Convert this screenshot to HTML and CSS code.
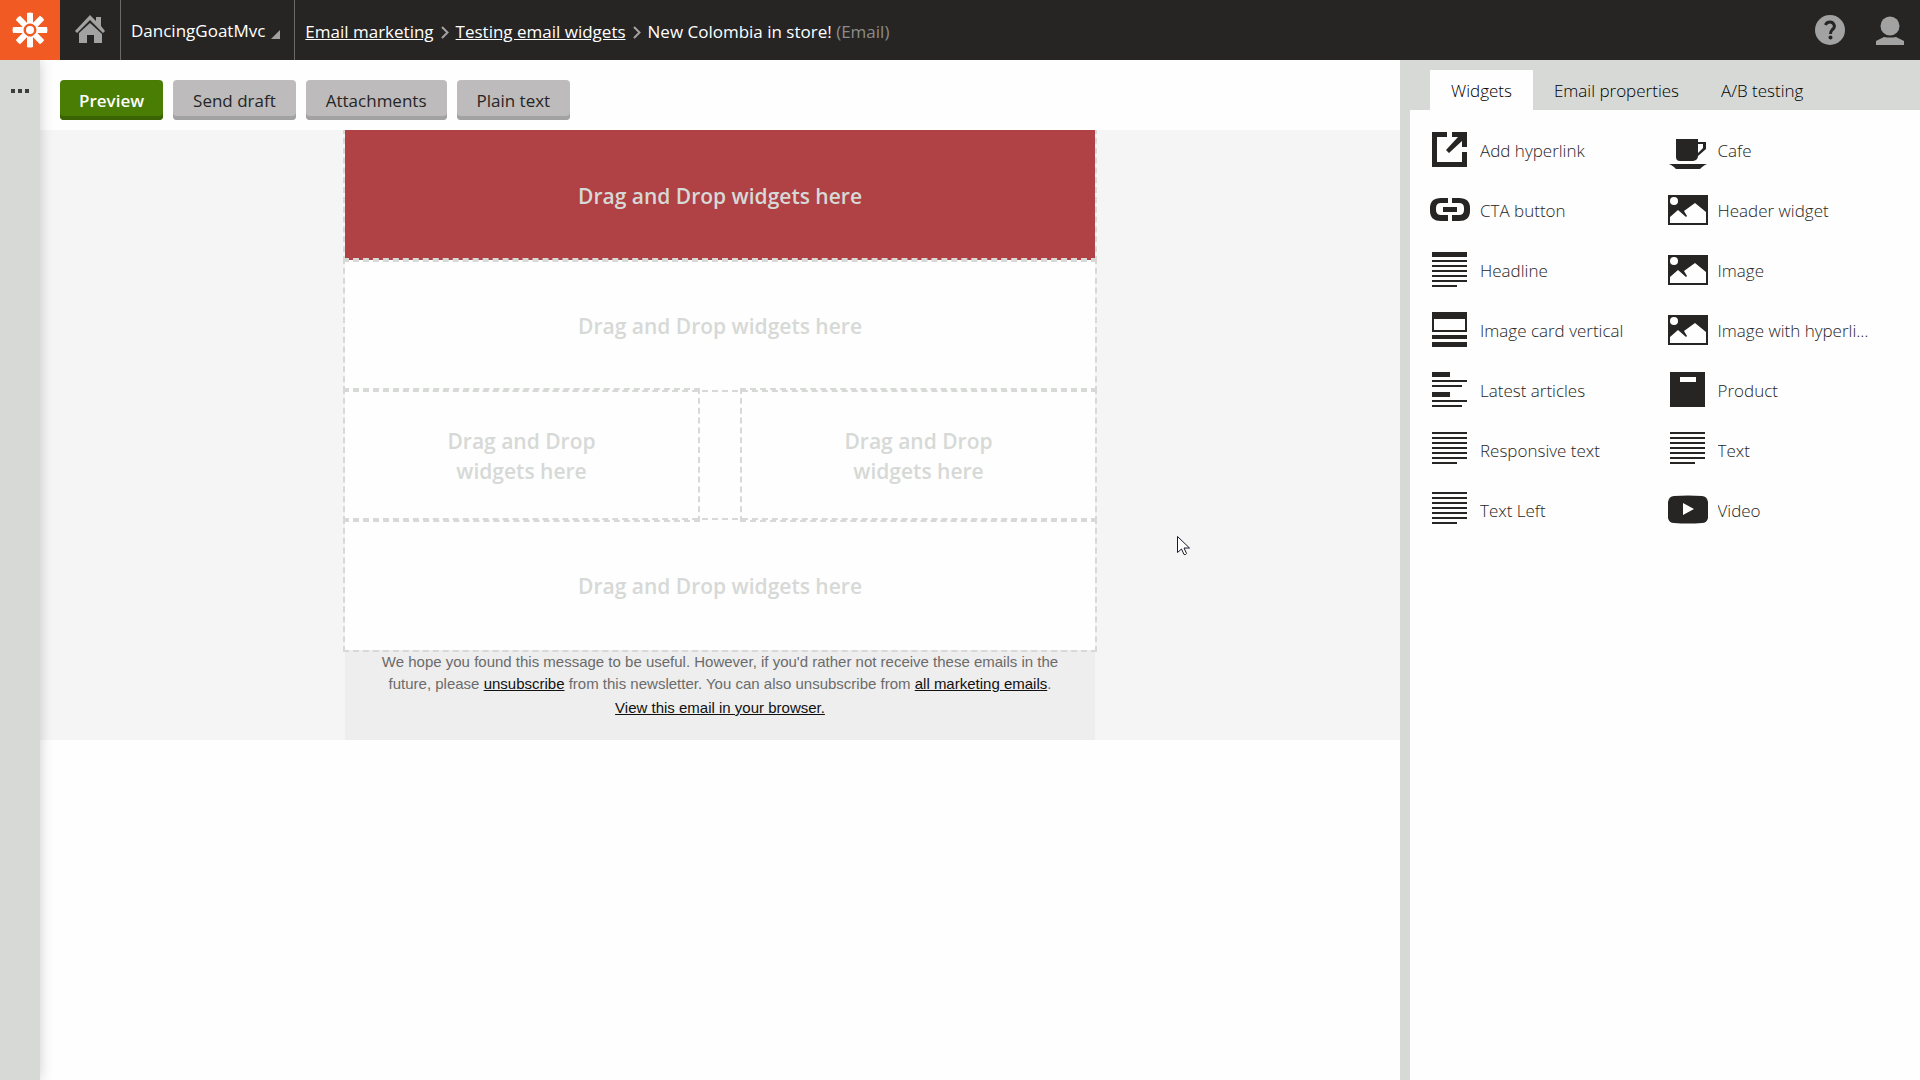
FILE: index.html
```
<!DOCTYPE html>
<html lang="en">
<head>
<meta charset="utf-8">
<title>New Colombia in store!</title>
<link rel="stylesheet" href="styles.css">
</head>
<body>
<svg class="sprite" aria-hidden="true">
  <symbol id="i-open" viewBox="0 0 40 40"><path d="M2 2h15v5H7v25h25V22h5v15H2zM22 2h15v15h-5v-6L19 23l-3-3 12-13h-6z"/></symbol>
  <symbol id="i-cup" viewBox="0 0 40 40"><path d="M8 9h22v3h8v7l-8 7a5 5 0 0 1-5 5H12a4 4 0 0 1-4-4zM30 14v9l5-5v-4zM1 34h38c-3 1-5 3-7 5H8c-2-2-4-4-7-5z" fill-rule="evenodd"/></symbol>
  <symbol id="i-chain" viewBox="0 0 40 40"><path d="M18 8v5h-7q-5 0-5 5v2q0 5 5 5h7v6h-7Q0 31 0 21v-3Q0 8 11 8zM22 8v5h7q5 0 5 5v2q0 5-5 5h-7v6h7q11 0 11-10v-3Q40 8 29 8zM13 17h14v5H13z"/></symbol>
  <symbol id="i-picture" viewBox="0 0 40 40"><path d="M0 5h40v30H0zM2 27v6h36V22L27 13l-11 8 3 5-1 1-8-7z" fill-rule="evenodd"/><circle cx="6" cy="11" r="4" fill="#fff"/></symbol>
  <symbol id="i-headline" viewBox="0 0 40 40"><path d="M2 2h35v5H2zM2 10h35v2H2zM2 15h35v2H2zM2 20h35v2H2zM2 25h35v2H2zM2 30h35v2H2zM2 35h25v2H2z"/></symbol>
  <symbol id="i-card" viewBox="0 0 40 40"><path d="M2 2h35v20H2zM4 9v11h31V9zM2 25h35v4H2zM2 32h35v5H2z" fill-rule="evenodd"/></symbol>
  <symbol id="i-articles" viewBox="0 0 40 40"><path d="M2 2h18v5H2zM2 10h35v2H2zM2 15h30v2H2zM2 22h18v5H2zM2 30h35v2H2zM2 35h30v2H2z"/></symbol>
  <symbol id="i-product" viewBox="0 0 40 40"><path d="M2 2h35v35H2zM12 7v5h16V7z" fill-rule="evenodd"/></symbol>
  <symbol id="i-text" viewBox="0 0 40 40"><path d="M2 2h35v2H2zM2 7h35v2H2zM2 12h35v2H2zM2 17h35v2H2zM2 22h35v2H2zM2 27h35v2H2zM2 32h25v2H2z"/></symbol>
  <symbol id="i-video" viewBox="0 0 40 40"><path d="M6 6q14-1 28 0 5 0 6 6 1 8 0 16-1 5-6 5-14 1-28 0-5 0-6-5-1-8 0-16 1-6 6-6zM15 13v12l11-6z" fill-rule="evenodd"/></symbol>
</svg>
<header class="topbar">
  <a class="logo" href="#" aria-label="Dashboard">
    <svg width="36" height="36" viewBox="-18 -18 36 36" fill="#fff">
      <circle r="4"/>
      <g id="petals"><path id="petal" d="M-3-17q3-1 6 0v11q-3-1-6 0z"/><use href="#petal" transform="rotate(45)"/><use href="#petal" transform="rotate(90)"/><use href="#petal" transform="rotate(135)"/></g>
      <use href="#petals" transform="rotate(180)"/>
    </svg>
  </a>
  <a class="home" href="#" aria-label="Home">
    <svg width="30" height="30" viewBox="0 0 30 30" fill="#a3a2a2"><path d="M15 0l6 6V2h5v9l4 5-2 2L15 5 2 18l-2-2zM15 8l12 11v9h-8v-8h-7v8H4V18z"/></svg>
  </a>
  <button class="site" type="button">DancingGoatMvc <svg width="9" height="9" viewBox="0 0 9 9" fill="#a3a2a2"><path d="M9 0v9H0z"/></svg></button>
  <nav class="crumbs" aria-label="Breadcrumb">
    <a href="#">Email marketing</a>
    <svg class="chevron" width="8" height="13" viewBox="0 0 8 13"><path d="M1 1l5.500 5.500L1 12"/></svg>
    <a href="#">Testing email widgets</a>
    <svg class="chevron" width="8" height="13" viewBox="0 0 8 13"><path d="M1 1l5.500 5.500L1 12"/></svg>
    <span>New Colombia in store! <span class="kind">(Email)</span></span>
  </nav>
  <button class="tool" type="button" aria-label="Help">
    <svg width="30" height="30" viewBox="0 0 30 30"><circle cx="15" cy="15" r="15" fill="#a3a2a2"/><path d="M10.500 10q1-3 4.500-3t4.500 4q0 2-2.500 4-1.500 1.500-1.500 4" fill="none" stroke="#262524" stroke-width="3"/><circle cx="15.500" cy="22.500" r="2" fill="#262524"/></svg>
  </button>
  <button class="tool" type="button" aria-label="User">
    <svg width="28" height="30" viewBox="0 0 28 30" fill="#a3a2a2"><circle cx="14" cy="11" r="9.500"/><path d="M0 30v-4q4-2 8-4 6 1 12 0 4 2 8 4v4z"/></svg>
  </button>
</header>
<div class="workspace">
  <aside class="rail"><button type="button" aria-label="Expand"><i></i><i></i><i></i></button></aside>
  <main class="editor">
    <div class="actions">
      <button class="btn primary" type="button">Preview</button>
      <button class="btn" type="button">Send draft</button>
      <button class="btn" type="button">Attachments</button>
      <button class="btn" type="button">Plain text</button>
    </div>
    <div class="canvas">
      <div class="email">
        <div class="zone hero">Drag and Drop widgets here</div>
        <div class="zone">Drag and Drop widgets here</div>
        <div class="columns">
          <div class="zone">Drag and Drop widgets here</div>
          <div class="zone">Drag and Drop widgets here</div>
        </div>
        <div class="zone">Drag and Drop widgets here</div>
        <footer class="legal">
          <p>We hope you found this message to be useful. However, if you'd rather not receive these emails in the future, please <a href="#">unsubscribe</a> from this newsletter. You can also unsubscribe from <a href="#">all marketing emails</a>.</p>
          <p><a href="#">View this email in your browser.</a></p>
        </footer>
      </div>
      <svg class="pointer" width="14" height="20" viewBox="0 0 14 20"><path d="M.5.500v16l4-3.500 2.500 5.500q2 .500 2.500-1L7 12h5.500z" fill="#fff" stroke="#1a1a2a"/></svg>
    </div>
  </main>
  <aside class="panel">
    <div class="tabs" role="tablist">
      <button class="tab active" role="tab" aria-selected="true" type="button">Widgets</button>
      <button class="tab" role="tab" aria-selected="false" type="button">Email properties</button>
      <button class="tab" role="tab" aria-selected="false" type="button">A/B testing</button>
    </div>
    <ul class="widgets">
      <li><svg><use href="#i-open"/></svg><span>Add hyperlink</span></li>
      <li><svg><use href="#i-cup"/></svg><span>Cafe</span></li>
      <li><svg><use href="#i-chain"/></svg><span>CTA button</span></li>
      <li><svg><use href="#i-picture"/></svg><span>Header widget</span></li>
      <li><svg><use href="#i-headline"/></svg><span>Headline</span></li>
      <li><svg><use href="#i-picture"/></svg><span>Image</span></li>
      <li><svg><use href="#i-card"/></svg><span>Image card vertical</span></li>
      <li><svg><use href="#i-picture"/></svg><span>Image with hyperlink</span></li>
      <li><svg><use href="#i-articles"/></svg><span>Latest articles</span></li>
      <li><svg><use href="#i-product"/></svg><span>Product</span></li>
      <li><svg><use href="#i-text"/></svg><span>Responsive text</span></li>
      <li><svg><use href="#i-text"/></svg><span>Text</span></li>
      <li><svg><use href="#i-text"/></svg><span>Text Left</span></li>
      <li><svg><use href="#i-video"/></svg><span>Video</span></li>
    </ul>
  </aside>
</div>
</body>
</html>
```
FILE: styles.css
```
* { box-sizing: border-box; }
body {
  margin: 0;
  min-height: 100vh;
  display: flex;
  flex-direction: column;
  background: #fefefe;
  color: #262524;
  font-family: "Open Sans", "Noto Sans", sans-serif;
  font-size: 17px;
  line-height: 24px;
}
button {
  border: 0;
  margin: 0;
  padding: 0;
  background: none;
  color: inherit;
  font: inherit;
}
a { color: inherit; }
.sprite { display: none; }

/* Top bar */
.topbar {
  display: flex;
  height: 60px;
  background: #262524;
  color: #fff;
}
.logo, .home, .tool {
  display: flex;
  flex: none;
  align-items: center;
  justify-content: center;
  width: 60px;
}
.logo { background: #f15a22; }
.site {
  display: flex;
  align-items: center;
  gap: 6px;
  padding: 2px 14px 0 10px;
  border: solid #6b6a69;
  border-width: 0 1px;
}
.site svg { margin-top: 6px; }
.crumbs {
  display: flex;
  flex: 1;
  align-items: center;
  gap: 7px;
  padding: 4px 0 0 10px;
  white-space: nowrap;
}
.chevron { fill: none; stroke: #a3a2a2; stroke-width: 2; }
.kind { color: #8c8b8a; }

/* Page columns */
.workspace { display: flex; flex: 1; }
.rail {
  flex: none;
  width: 40px;
  background: #d6d9d6;
  box-shadow: 0 0 14px rgba(0, 0, 0, 0.2);
  clip-path: inset(0 -14px 0 0);
  z-index: 1;
}
.rail button { display: flex; gap: 3px; padding: 29px 11px; }
.rail i { width: 4px; height: 4px; background: #403e3d; }
.editor { flex: 1; min-width: 0; }
.actions { display: flex; gap: 10px; padding: 20px 20px 10px; }
.btn {
  height: 40px;
  padding: 2px 20px 0;
  border-radius: 4px;
  background: #bdbbbb;
  box-shadow: inset 0 -4px #a3a2a2;
  font-weight: 500;
}
.primary {
  padding: 2px 19px 0;
  background: #497d04;
  box-shadow: inset 0 -4px #3a6403;
  color: #fff;
  font-weight: 600;
}

/* Email canvas */
.canvas {
  position: relative;
  overflow: hidden;
  background: #f5f5f5;
}
.email { max-width: 750px; margin: 0 auto; }
.zone {
  display: flex;
  align-items: center;
  justify-content: center;
  min-height: 130px;
  padding: 2px 40px 0;
  background: #fefefe;
  outline: 2px dashed #d6d9d6;
  color: #d6d9d6;
  font-size: 21px;
  font-weight: 600;
  line-height: 30px;
  text-align: center;
}
.hero { background: #b04144; }
.columns {
  display: grid;
  grid-template-columns: 1fr 1fr;
  gap: 44px;
  background: #fefefe;
}
.columns .zone { padding: 2px 80px 0; }
.legal {
  padding: 1px 30px 19px;
  background: #eee;
  color: #6b6b6b;
  font: 15px/22px "Liberation Sans", Arial, sans-serif;
  text-align: center;
}
.legal p { margin: 0 0 2px; }
.legal a { color: #111; }
.pointer { position: absolute; left: 1137px; top: 406px; }

/* Widget panel */
.panel {
  flex: none;
  width: 520px;
  border-left: 10px solid #d6d9d6;
}
.tabs {
  display: flex;
  padding: 10px 20px 0;
  background: #d6d9d6;
}
.tab {
  height: 40px;
  padding: 2px 21px 0;
  color: #000;
  font-weight: 300;
}
.active { background: #fefefe; }
.widgets {
  display: grid;
  grid-template-columns: 1fr 1fr;
  gap: 20px 0;
  margin: 0;
  padding: 20px 15px 20px 20px;
  list-style: none;
  font-weight: 300;
}
.widgets li {
  display: flex;
  align-items: center;
  gap: 10px;
  min-width: 0;
  padding-right: 32px;
}
.widgets svg { flex: none; width: 40px; height: 40px; fill: #262524; }
.widgets span {
  padding-top: 2px;
  overflow: hidden;
  text-overflow: ellipsis;
  white-space: nowrap;
}
```
